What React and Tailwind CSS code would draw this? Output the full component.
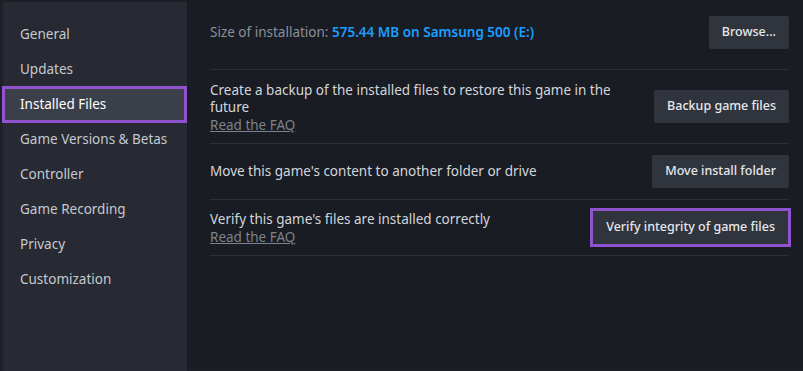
export default function App() {
  const items = [
    "General",
    "Updates",
    "Installed Files",
    "Game Versions & Betas",
    "Controller",
    "Game Recording",
    "Privacy",
    "Customization",
  ];
  const font = { fontFamily: '"Noto Sans", "Open Sans", Arial, sans-serif' };
  const btn =
    "h-[33px] px-[13px] flex items-center rounded-[2px] bg-[#30343d] text-[#e6e8ec] text-[12.5px] font-medium whitespace-nowrap";
  return (
    <div
      className="w-[803px] h-[371px] flex bg-[#1d2027] pt-[2px] pl-[3px] overflow-hidden"
      style={font}
    >
      <div className="w-[184px] h-full bg-[#272a32] pt-[15px] flex flex-col">
        {items.map((it) =>
          it === "Installed Files" ? (
            <div
              key={it}
              className="h-[37px] -ml-[1px] mt-[-1px] mb-[-1px] flex items-center pl-[15px] bg-[#3b3f49] border-[3px] border-[#9152cf] text-white text-[13.5px]"
            >
              {it}
            </div>
          ) : (
            <div
              key={it}
              className="h-[35px] flex items-center pl-[17px] text-[#c5c9d0] text-[13.5px]"
            >
              {it}
            </div>
          )
        )}
      </div>
      <div className="flex-1 h-full bg-[#191c23] pl-[23px] pr-[12px] -mt-[2px]">
        <div className="flex flex-col w-[579px]">
          <div className="h-[70px] pb-[4px] flex items-center justify-between border-b border-[#2b2f37]">
            <div className="text-[13.5px]">
              <span className="text-[#8a9099]">Size of installation: </span>
              <span className="text-[#1a9fff] font-semibold">575.44 MB on Samsung 500 (E:)</span>
            </div>
            <div className={btn + " h-[32px] px-[12px]"}>Browse...</div>
          </div>
          <div className="h-[74px] flex items-center justify-between border-b border-[#2b2f37]">
            <div className="text-[13.5px] leading-[17.5px] w-[410px] pt-[3px]">
              <div className="text-[#d3d6db]">
                Create a backup of the installed files to restore this game in the future
              </div>
              <div className="text-[#7d838c] underline">Read the FAQ</div>
            </div>
            <div className={btn}>Backup game files</div>
          </div>
          <div className="h-[56px] flex items-center justify-between border-b border-[#2b2f37]">
            <div className="text-[13.5px] text-[#d3d6db]">
              Move this game's content to another folder or drive
            </div>
            <div className={btn + " px-[12px]"}>Move install folder</div>
          </div>
          <div className="h-[56px] flex items-center justify-between border-b border-[#2b2f37]">
            <div className="text-[13.5px] leading-[18px]">
              <div className="text-[#d3d6db]">Verify this game's files are installed correctly</div>
              <div className="text-[#7d838c] underline">Read the FAQ</div>
            </div>
            <div className="border-[3px] border-[#9152cf] -mr-[2px]">
              <div className={btn + " px-[8px]"}>Verify integrity of game files</div>
            </div>
          </div>
        </div>
      </div>
    </div>
  );
}
